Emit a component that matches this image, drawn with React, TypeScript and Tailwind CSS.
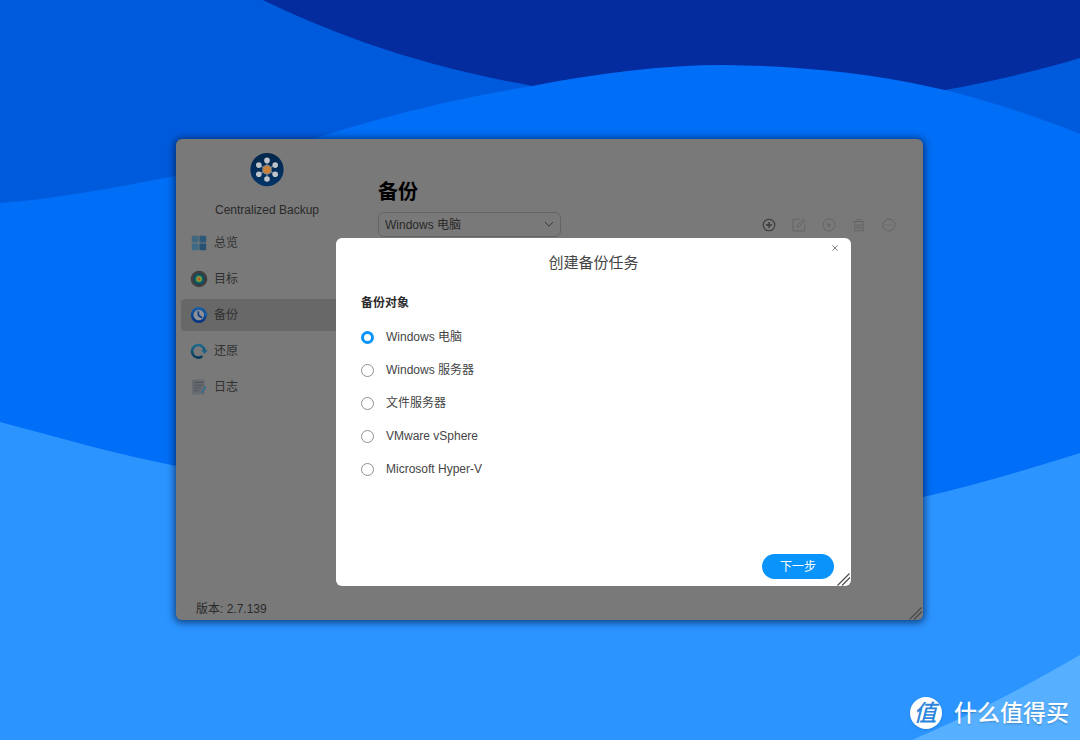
import { useState } from 'react'
import type { ReactNode } from 'react'

const targets = ['Windows 电脑', 'Windows 服务器', '文件服务器', 'VMware vSphere', 'Microsoft Hyper-V']

function Wallpaper() {
  return (
    <svg
      className="absolute inset-0 h-full w-full"
      viewBox="0 0 1080 740"
      preserveAspectRatio="none"
      aria-hidden="true"
    >
      <rect width="1080" height="740" fill="#005bdc" />
      <path d="M263 0 C350 42 430 67 532 86 L740 110 L945 90 C990 82 1040 70 1080 58 V0 Z" fill="#042c9e" />
      <path
        d="M0 203 C60 199 120 186 176 176 C230 162 280 150 322 136 C400 112 460 98 532 86 C600 73 660 65 725 65 C810 66 880 75 945 90 C1000 104 1040 118 1080 134 V740 H0 Z"
        fill="#006ef6"
      />
      <path d="M0 422 C60 438 120 455 176 466 C420 530 700 550 923 497 C980 484 1035 467 1080 453 V740 H0 Z" fill="#2b94ff" />
      <path d="M912 740 C975 713 1025 687 1080 655 V740 Z" fill="#56b0ff" />
    </svg>
  )
}

function Logo() {
  const dots = [
    [17, 7.4],
    [25.2, 12.1],
    [25.2, 21.3],
    [17, 26],
    [8.8, 21.3],
    [8.8, 12.1],
  ]
  return (
    <svg className="size-[34px]" viewBox="0 0 34 34" aria-hidden="true">
      <defs>
        <linearGradient id="logo" x1="0" y1="0" x2="0" y2="1">
          <stop offset="0" stopColor="#02264a" />
          <stop offset="1" stopColor="#033468" />
        </linearGradient>
      </defs>
      <circle cx="17" cy="16.6" r="16.6" fill="url(#logo)" />
      {dots.map(([x, y]) => (
        <g key={`${x}-${y}`}>
          <path d={`M17 16.7 L${x} ${y}`} stroke="#7c8ca0" strokeWidth="1.2" />
          <circle cx={x} cy={y} r="2.8" fill="#bfc4cb" />
        </g>
      ))}
      <circle cx="17" cy="16.7" r="4.9" fill="#77828e" />
      <circle cx="17" cy="16.7" r="3.9" fill="#c8813a" />
    </svg>
  )
}

function OverviewIcon() {
  return (
    <svg className="size-4" viewBox="0 0 16 16" aria-hidden="true">
      <rect x="0.8" y="0.8" width="6.8" height="6.8" rx="0.8" fill="#3f6780" />
      <rect x="8.4" y="0.8" width="6.8" height="6.8" rx="0.8" fill="#2e5877" />
      <rect x="0.8" y="8.4" width="6.8" height="6.8" rx="0.8" fill="#3f6a85" />
      <rect x="8.4" y="8.4" width="6.8" height="6.8" rx="0.8" fill="#265373" />
    </svg>
  )
}

function TargetIcon() {
  return (
    <svg className="size-4 overflow-visible" viewBox="0 0 16 16" aria-hidden="true">
      <circle cx="8" cy="8" r="8.3" fill="#3f3f40" />
      <circle cx="8" cy="8" r="5.5" fill="#0b4a64" />
      <circle cx="8" cy="8" r="4" fill="#16785f" />
      <circle cx="8" cy="8" r="2.7" fill="#9c9430" />
      <circle cx="8" cy="8" r="1.2" fill="#b5502f" />
    </svg>
  )
}

function BackupIcon() {
  return (
    <svg className="size-4 overflow-visible" viewBox="0 0 16 16" aria-hidden="true">
      <defs>
        <linearGradient id="backup" x1="0" y1="0" x2="0" y2="1">
          <stop offset="0" stopColor="#1b5fa6" />
          <stop offset="1" stopColor="#06307d" />
        </linearGradient>
      </defs>
      <circle cx="7.8" cy="8" r="8" fill="url(#backup)" />
      <path d="M12.5 6.2 H17.2 L14.6 9.6 Z" fill="#1b5fa6" />
      <circle cx="7.8" cy="8" r="5.3" fill="#8e9197" />
      <path d="M7.4 4.2 V8.2 L11 10.8" fill="none" stroke="#0b3c8a" strokeWidth="1.7" />
    </svg>
  )
}

function RestoreIcon() {
  return (
    <svg className="size-4 overflow-visible" viewBox="0 0 16 16" aria-hidden="true">
      <defs>
        <linearGradient id="restore" x1="0" y1="0" x2="0" y2="1">
          <stop offset="0" stopColor="#1b6a8c" />
          <stop offset="1" stopColor="#083a5a" />
        </linearGradient>
      </defs>
      <path
        d="M13.6 8 A6.3 6.3 0 1 0 11.4 13.1"
        fill="none"
        stroke="url(#restore)"
        strokeWidth="2.6"
      />
      <path d="M10.4 7.2 H16.6 L13.5 11 Z" fill="#1a6282" />
    </svg>
  )
}

function LogIcon() {
  return (
    <svg className="size-4" viewBox="0 0 16 16" aria-hidden="true">
      <rect x="1" y="0.6" width="12.8" height="15" rx="0.8" fill="#676b70" />
      <path d="M3 3.4 H12 M3 6.2 H12 M3 9 H10 M3 11.8 H8" stroke="#50545a" strokeWidth="1.1" />
      <path d="M14.8 7.4 L10.6 13.8" stroke="#2f6c93" strokeWidth="1.5" />
    </svg>
  )
}

const navItems = [
  { label: '总览', icon: <OverviewIcon /> },
  { label: '目标', icon: <TargetIcon /> },
  { label: '备份', icon: <BackupIcon />, active: true },
  { label: '还原', icon: <RestoreIcon /> },
  { label: '日志', icon: <LogIcon /> },
]

function ToolButton({ label, disabled, children }: { label: string; disabled?: boolean; children: ReactNode }) {
  return (
    <button
      type="button"
      aria-label={label}
      disabled={disabled}
      className={disabled ? 'text-[#646464]' : 'text-[#383838]'}
    >
      <svg className="size-3.5 overflow-visible" viewBox="0 0 14 14" fill="none" stroke="currentColor" aria-hidden="true">
        {children}
      </svg>
    </button>
  )
}

function ResizeGrip() {
  return (
    <svg
      className="absolute right-0 bottom-0 size-3.5"
      viewBox="0 0 14 14"
      stroke="#484848"
      strokeWidth="1.1"
      aria-hidden="true"
    >
      <path d="M0.5 13.5 L12.5 1.5 M5 13.5 L13 5.5" />
    </svg>
  )
}

function Sidebar() {
  return (
    <aside className="flex w-[182px] shrink-0 flex-col">
      <div className="flex flex-col items-center pt-3.5">
        <Logo />
        <p className="mt-[13px] text-xs leading-5">Centralized Backup</p>
      </div>
      <nav className="mt-[7px] flex flex-col gap-1 pl-[5px]">
        {navItems.map((item) => (
          <a
            key={item.label}
            href="#"
            className={`flex h-8 items-center gap-[7px] rounded px-2.5 text-xs text-[#303030] ${item.active ? 'bg-[#686868]' : ''}`}
          >
            {item.icon}
            {item.label}
          </a>
        ))}
      </nav>
      <p className="mt-auto px-5 pb-px text-xs leading-5">版本: 2.7.139</p>
    </aside>
  )
}

function BackupPage() {
  return (
    <main className="min-w-0 flex-1 pt-[37px] pr-[27px] pl-5">
      <h1 className="text-xl leading-8 font-bold text-black">备份</h1>
      <div className="mt-1 flex items-center justify-between">
        <div className="relative w-[183px]">
          <select
            aria-label="设备类型"
            className="block h-[25px] w-full appearance-none rounded-md border border-[#646464] bg-transparent px-1.5 text-xs"
          >
            <option>Windows 电脑</option>
          </select>
          <svg
            className="pointer-events-none absolute top-[7px] right-[7px] size-2.5"
            viewBox="0 0 10 10"
            fill="none"
            stroke="#3a3a3a"
            aria-hidden="true"
          >
            <path d="M1 3 L5 7.2 L9 3" />
          </svg>
        </div>
        <div className="flex items-center gap-4">
          <ToolButton label="创建">
            <circle cx="7" cy="7" r="5.8" strokeWidth="1.1" />
            <path d="M7 4 V10 M4 7 H10" strokeWidth="1.3" />
          </ToolButton>
          <ToolButton label="编辑" disabled>
            <path d="M7.5 1.2 H1 V13 H12.8 V7" />
            <path d="M5 9.2 L5.6 7 L11.4 1.2 L13 2.8 L7.2 8.6 Z" />
          </ToolButton>
          <ToolButton label="运行" disabled>
            <circle cx="7" cy="7" r="6" />
            <path d="M6 5 L8.6 7 L6 9 Z" fill="currentColor" strokeWidth="0.6" />
          </ToolButton>
          <ToolButton label="删除" disabled>
            <path d="M1.5 3.6 H12.5 M5 3.4 V1.4 H9 V3.4 M2.8 3.6 V12.8 H11.2 V3.6 M5 6 V11 M7 6 V11 M9 6 V11" />
          </ToolButton>
          <ToolButton label="更多" disabled>
            <circle cx="7" cy="7" r="6" />
            <path d="M3.8 7 H5 M6.4 7 H7.6 M9 7 H10.2" strokeWidth="1.2" />
          </ToolButton>
        </div>
      </div>
    </main>
  )
}

function CreateTaskDialog() {
  const [selected, setSelected] = useState(targets[0])

  return (
    <div
      role="dialog"
      aria-labelledby="dialog-title"
      className="absolute top-[99px] left-[160px] flex min-h-[348px] w-[515px] flex-col rounded-md bg-white pb-[7px] text-[#444444]"
    >
      <header className="relative pt-[13px]">
        <h2 id="dialog-title" className="text-center text-[15px] leading-6">
          创建备份任务
        </h2>
        <button type="button" aria-label="关闭" className="absolute top-[5px] right-[11px] p-0.5">
          <svg className="size-1.5" viewBox="0 0 6 6" stroke="#777777" strokeWidth="0.9" aria-hidden="true">
            <path d="M0.3 0.3 L5.7 5.7 M5.7 0.3 L0.3 5.7" />
          </svg>
        </button>
      </header>
      <fieldset className="mt-4 px-[25px]">
        <legend className="text-xs leading-6 font-bold text-[#2c2c2c]">备份对象</legend>
        <div className="mt-2.5 flex flex-col gap-[9px]">
          {targets.map((target) => (
            <label key={target} className="flex h-6 items-center gap-3 text-xs">
              <input
                type="radio"
                name="target"
                checked={selected === target}
                onChange={() => setSelected(target)}
                className="size-[13px] appearance-none rounded-full border border-[#8f8f8f] bg-white checked:border-3 checked:border-[#0894fb]"
              />
              {target}
            </label>
          ))}
        </div>
      </fieldset>
      <footer className="mt-auto flex justify-end px-[17px]">
        <button type="button" className="h-[25px] rounded-full bg-[#0894fb] px-[18px] text-xs text-white">
          下一步
        </button>
      </footer>
      <ResizeGrip />
    </div>
  )
}

function Watermark() {
  return (
    <div className="absolute right-[11px] bottom-[11px] flex items-center gap-3 text-white">
      <span className="flex size-8 items-center justify-center rounded-full bg-white pr-0.5 text-[23px] leading-8 font-medium text-[#2c85dc] italic shadow">
        值
      </span>
      <span className="text-[23px] leading-8 font-medium text-shadow-sm">什么值得买</span>
    </div>
  )
}

export default function App() {
  return (
    <div className="relative min-h-screen overflow-hidden font-['Liberation_Sans','Noto_Sans_CJK_SC',sans-serif]">
      <Wallpaper />
      <div className="absolute top-[139px] left-[176px] flex min-h-[481px] w-[747px] rounded-md bg-[#797979] text-[#292929] shadow-[0_1px_7px_2px_rgba(0,20,60,0.6)]">
        <Sidebar />
        <BackupPage />
        <ResizeGrip />
        <CreateTaskDialog />
      </div>
      <Watermark />
    </div>
  )
}
